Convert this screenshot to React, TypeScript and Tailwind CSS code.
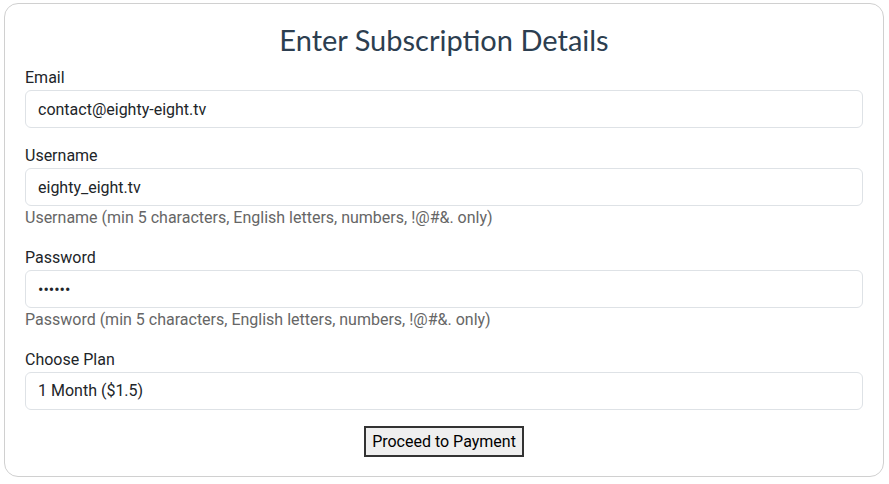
export default function App() {
  return (
    <div className="bg-white min-h-screen pt-[3px] pl-[4px]" style={{ fontFamily: "Roboto, 'Liberation Sans', sans-serif" }}>
      <div className="w-[880px] h-[474px] border border-[#d0d0d0] rounded-[14px] px-5 pt-5 text-[#212529]">
        <h1 className="text-center text-[29px] leading-[32px] text-[#2c3e50] mb-[10px]" style={{ fontFamily: "Lato, 'Open Sans', sans-serif" }}>
          Enter Subscription Details
        </h1>
        <form className="flex flex-col" onSubmit={(e) => e.preventDefault()}>
          <Field label="Email">
            <input readOnly value="contact@eighty-eight.tv" className="w-full h-[38px] px-3 text-base border border-[#dee2e6] rounded-md outline-none" />
          </Field>
          <Field label="Username" help="Username (min 5 characters, English letters, numbers, !@#&. only)">
            <input readOnly value="eighty_eight.tv" className="w-full h-[38px] px-3 text-base border border-[#dee2e6] rounded-md outline-none" />
          </Field>
          <Field label="Password" help="Password (min 5 characters, English letters, numbers, !@#&. only)">
            <input readOnly type="password" value="123456" className="w-full h-[38px] px-3 text-base border border-[#dee2e6] rounded-md outline-none" />
          </Field>
          <Field label="Choose Plan">
            <select className="w-full h-[38px] px-3 text-base border border-[#dee2e6] rounded-md outline-none appearance-none bg-white" defaultValue="1">
              <option value="1">1 Month ($1.5)</option>
            </select>
          </Field>
          <div className="flex justify-center">
            <button type="submit" className="h-[31px] px-[6px] text-base text-black bg-[#efefef] border-2 border-[#333]">
              Proceed to Payment
            </button>
          </div>
        </form>
      </div>
    </div>
  )
}

function Field({ label, help, children }: { label: string; help?: string; children: React.ReactNode }) {
  return (
    <div className="mb-4">
      <label className="block text-base leading-6">{label}</label>
      {children}
      {help && <div className="text-base leading-6 text-[#666]">{help}</div>}
    </div>
  )
}
